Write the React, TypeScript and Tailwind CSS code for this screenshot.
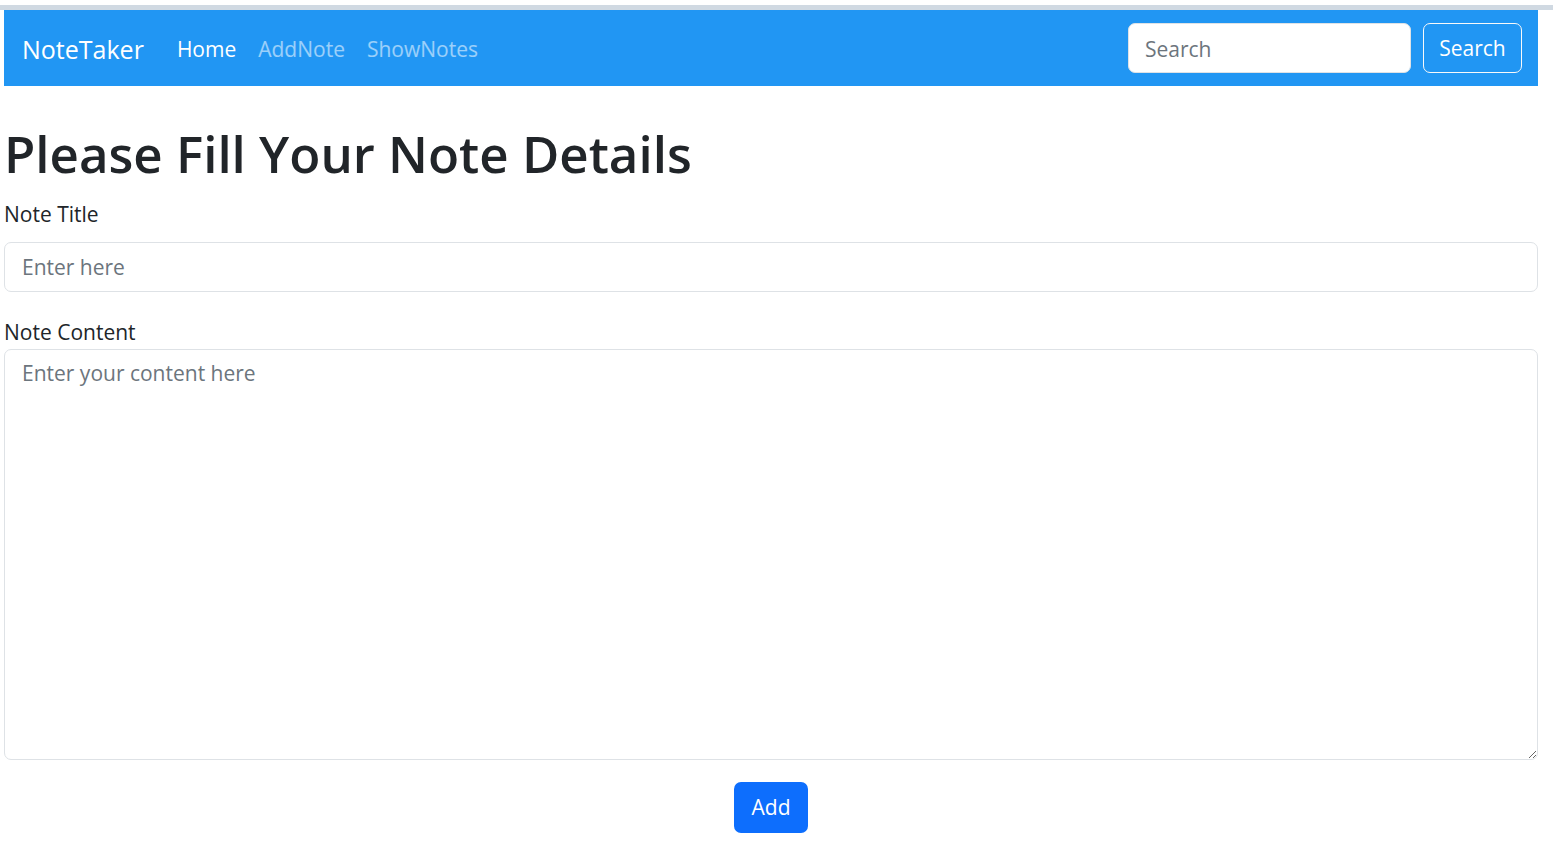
import React from "react";

const App = () => {
  return (
    <div className="min-h-screen bg-white font-['Open_Sans',sans-serif] text-[#212529]">
      <div className="h-[5px]" />
      <div className="h-[5px] bg-[#d0d9e2]" />
      <div className="pl-[4px] pr-[15px]">
        <nav className="flex h-[76px] items-center justify-between bg-[#2196f3] pl-[18px] pr-[16px]">
          <div className="mt-[2px] flex items-center">
            <a href="#" className="mr-[22px] text-[25px] leading-[38px] text-white">
              NoteTaker
            </a>
            <a href="#" className="px-[11px] text-[21px] leading-[32px] text-white">
              Home
            </a>
            <a href="#" className="px-[11px] text-[21px] leading-[32px] text-white/55">
              AddNote
            </a>
            <a href="#" className="px-[11px] text-[21px] leading-[32px] text-white/55">
              ShowNotes
            </a>
          </div>
          <form className="flex items-center gap-[12px]">
            <input
              type="search"
              placeholder="Search"
              className="h-[50px] w-[283px] rounded-[7px] border border-[#dee2e6] bg-white px-[16px] pt-[2px] text-[21px] outline-none placeholder:text-[#6c757d]"
            />
            <button
              type="button"
              className="h-[50px] w-[99px] rounded-[7px] border border-[#f8f9fa] pt-[2px] text-[21px] text-white"
            >
              Search
            </button>
          </form>
        </nav>

        <div className="pt-[35px]">
          <h1 className="text-[51px] font-semibold leading-[64px]">Please Fill Your Note Details</h1>
          <label className="mt-[13px] block text-[21px] leading-[32px]">Note Title</label>
          <input
            type="text"
            placeholder="Enter here"
            className="mt-[12px] block h-[50px] w-full rounded-[7px] border border-[#dee2e6] px-[17px] text-[21px] outline-none placeholder:text-[#6c757d]"
          />
          <label className="mt-[24px] block text-[21px] leading-[32px]">Note Content</label>
          <textarea
            placeholder="Enter your content here"
            className="mt-[1px] block h-[411px] w-full rounded-[7px] border border-[#dee2e6] px-[17px] py-[7px] text-[21px] leading-[32px] outline-none placeholder:text-[#6c757d]"
          />
          <div className="mt-[22px] flex justify-center">
            <button
              type="button"
              className="h-[51px] w-[74px] rounded-[7px] bg-[#0d6efd] text-[21px] text-white"
            >
              Add
            </button>
          </div>
        </div>
      </div>
    </div>
  );
};

export default App;
